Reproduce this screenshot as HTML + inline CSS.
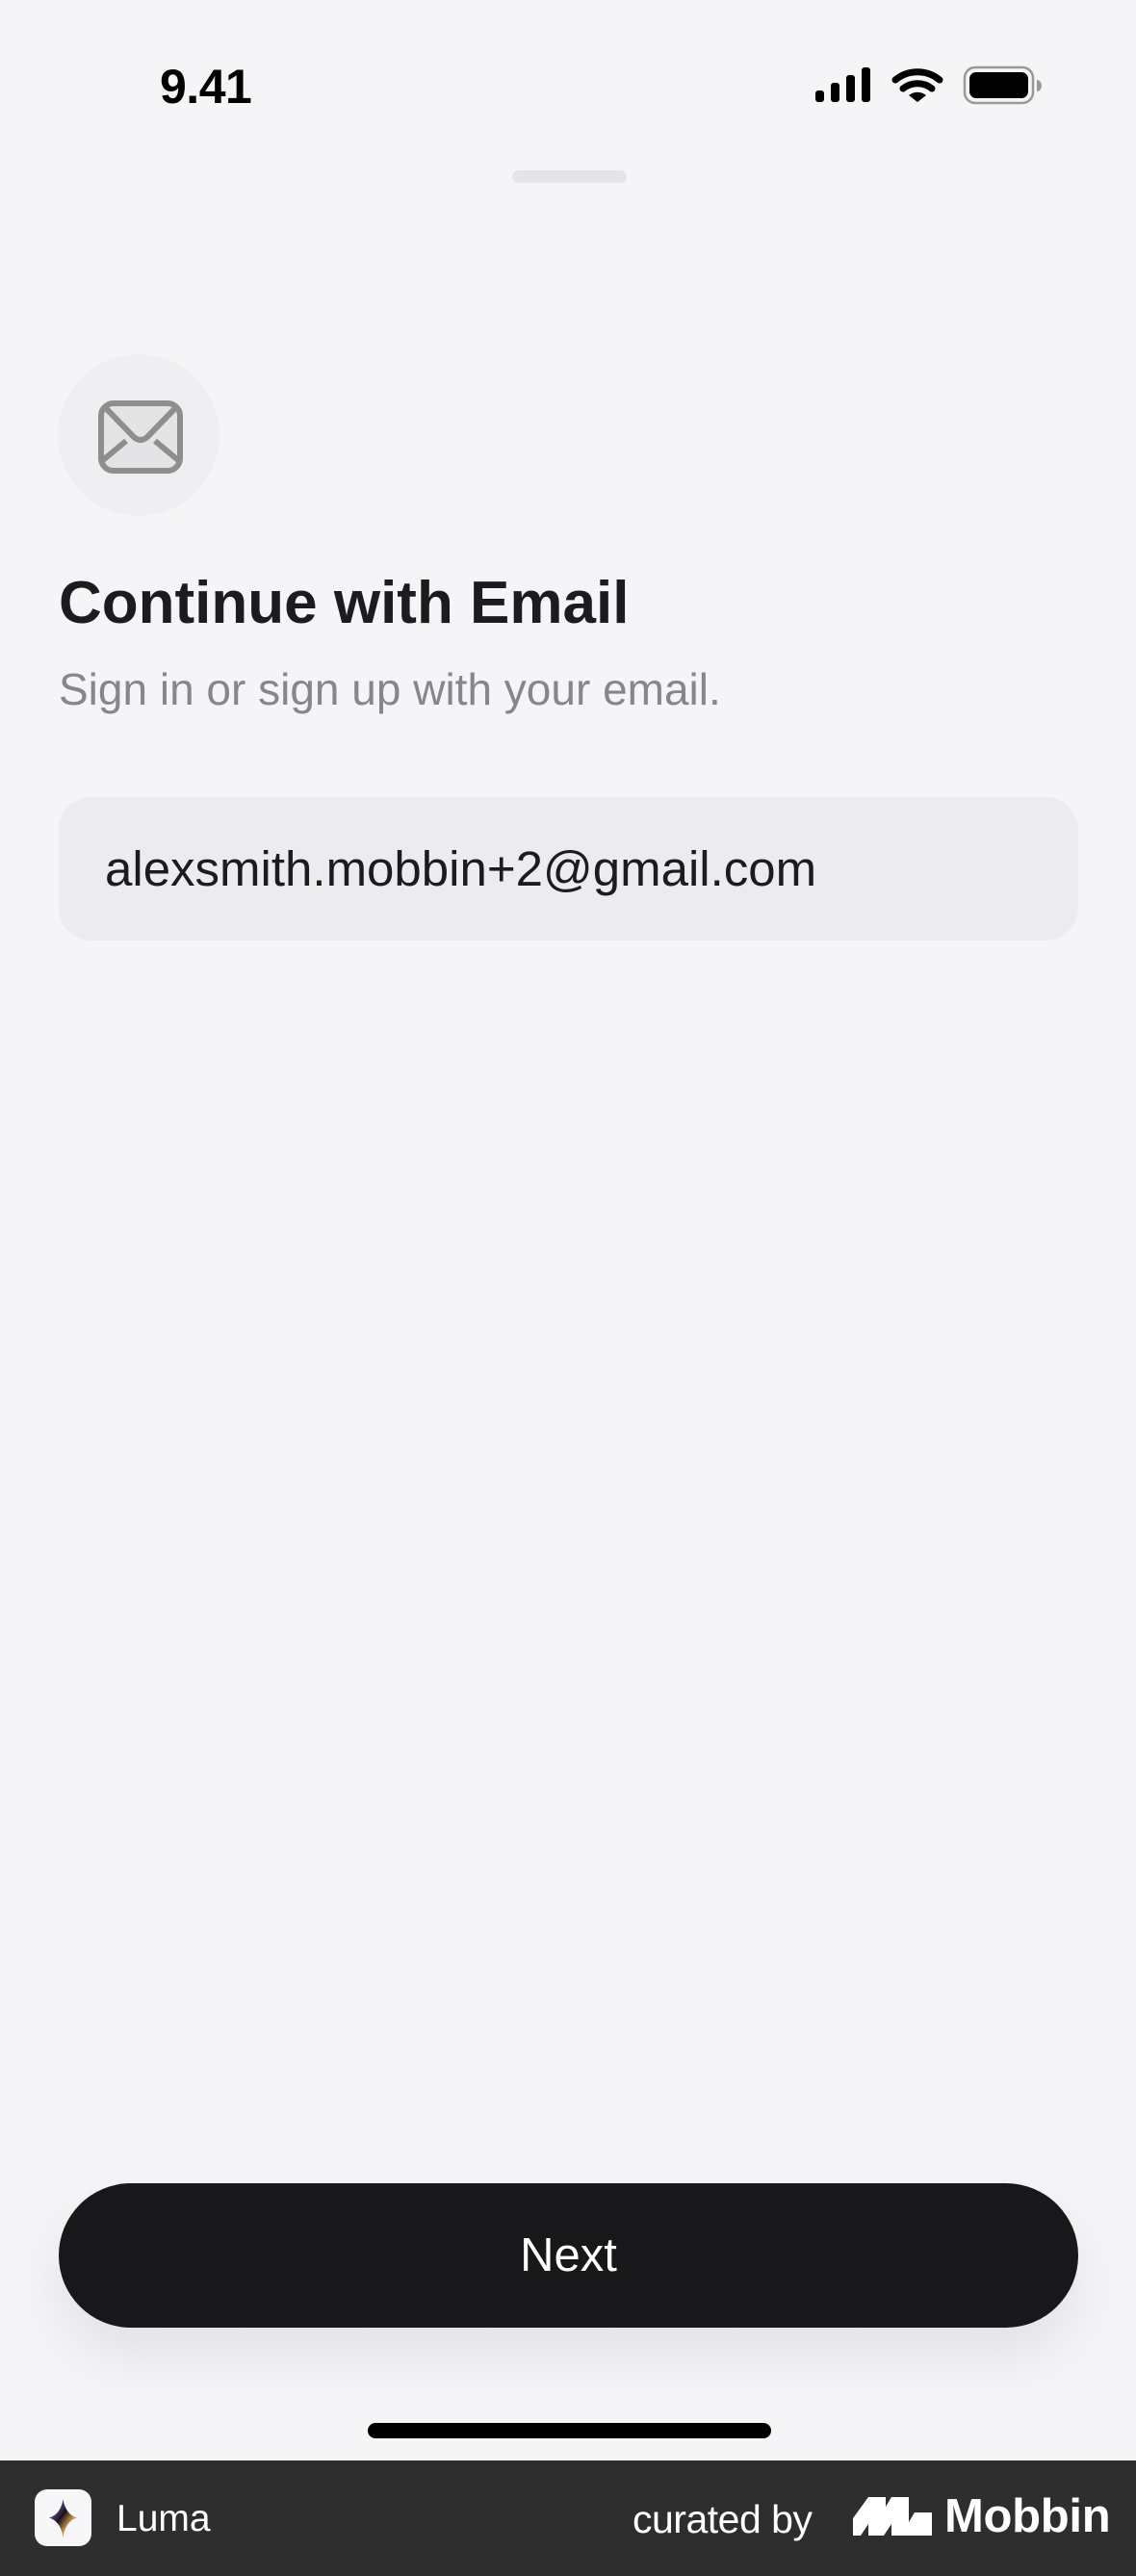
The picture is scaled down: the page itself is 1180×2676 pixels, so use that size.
<!DOCTYPE html>
<html><head><meta charset="utf-8"><style>
*{margin:0;padding:0;box-sizing:border-box}
body{width:1180px;height:2676px;background:#f5f5f7;position:relative;overflow:hidden;font-family:"Liberation Sans",sans-serif}
.a{position:absolute;white-space:nowrap}
</style></head><body>
<div class="a" style="left:166px;top:60px;font-size:50px;font-weight:bold;color:#000;line-height:60px;letter-spacing:-0.5px">9.41</div>
<svg class="a" style="left:845px;top:66px" width="245" height="45" viewBox="845 66 245 45">
<rect x="847" y="94" width="9" height="12" rx="3" fill="#000"/>
<rect x="863" y="86" width="9" height="20" rx="3" fill="#000"/>
<rect x="879" y="78" width="9" height="28" rx="3" fill="#000"/>
<rect x="895" y="70" width="9" height="36" rx="3" fill="#000"/>
<path d="M930 83 A36 36 0 0 1 976 83" stroke="#000" stroke-width="7" fill="none" stroke-linecap="round"/>
<path d="M938 92 A24 24 0 0 1 968 92" stroke="#000" stroke-width="7" fill="none" stroke-linecap="round"/>
<path d="M944 99 L953 106 L962 99 A14 14 0 0 0 944 99Z" fill="#000"/>
<rect x="1002" y="70" width="71" height="37" rx="11" fill="none" stroke="#999" stroke-width="2.5"/>
<rect x="1007" y="75" width="61" height="27" rx="7" fill="#000"/>
<path d="M1077 83 a5 6 0 0 1 0 12z" fill="#999"/>
</svg>
<div class="a" style="left:532px;top:177px;width:119px;height:13px;border-radius:7px;background:#e4e4e7"></div>
<div class="a" style="left:60px;top:368px;width:168px;height:168px;border-radius:50%;background:#efeff1"></div>
<svg class="a" style="left:100px;top:414px" width="92" height="80" viewBox="0 0 92 80">
<rect x="5" y="5" width="82" height="70" rx="13" fill="#e4e4e7" stroke="#8e8e8e" stroke-width="6"/>
<path d="M9 9 L39 40 Q46 46 53 40 L83 9" fill="none" stroke="#8e8e8e" stroke-width="6" stroke-linejoin="round"/>
<path d="M7 64 L31 44 M85 64 L61 44" stroke="#8e8e8e" stroke-width="6"/>
</svg>
<div class="a" style="left:61px;top:592px;font-size:62px;font-weight:bold;color:#1c1c1e;line-height:70px">Continue with Email</div>
<div class="a" style="left:61px;top:690px;font-size:46px;color:#86868b;line-height:52px">Sign in or sign up with your email.</div>
<div class="a" style="left:61px;top:828px;width:1059px;height:149px;border-radius:34px;background:#ececef"></div>
<div class="a" style="left:109px;top:874px;font-size:51px;color:#1c1c1e;line-height:58px">alexsmith.mobbin+2@gmail.com</div>
<div class="a" style="left:61px;top:2268px;width:1059px;height:150px;border-radius:75px;background:#18181a;box-shadow:0 30px 60px rgba(0,0,0,0.08);color:#fff;font-size:49px;text-align:center;line-height:150px">Next</div>
<div class="a" style="left:382px;top:2517px;width:419px;height:16px;border-radius:8px;background:#000"></div>
<div class="a" style="left:0;top:2556px;width:1180px;height:120px;background:#2e2e2e"></div>
<div class="a" style="left:36px;top:2586px;width:59px;height:59px;border-radius:13px;background:#f7f7f9"></div>
<svg class="a" style="left:36px;top:2586px" width="59" height="59" viewBox="0 0 59 59">
<defs><linearGradient id="g" x1="0" y1="0" x2="1" y2="1"><stop offset="0" stop-color="#b78cff"/><stop offset=".45" stop-color="#1a1020"/><stop offset=".7" stop-color="#d9a24a"/><stop offset="1" stop-color="#2a1a2a"/></linearGradient></defs>
<path d="M29.5 10 Q32 26 44 29.5 Q32 33 29.5 50 Q27 33 15 29.5 Q27 26 29.5 10Z" fill="url(#g)"/>
</svg>
<div class="a" style="left:121px;top:2594px;font-size:39px;color:#fff;line-height:46px">Luma</div>
<div class="a" style="left:657px;top:2594px;font-size:41px;color:#fff;line-height:46px;letter-spacing:-0.5px">curated by</div>
<svg class="a" style="left:886px;top:2594px" width="82" height="40" viewBox="0 0 82 40">
<path d="M0 40 L0 22 L16 0 L34 0 L34 10 L40 0 L58 0 L58 26 L64 16 L82 16 L82 40 L58 40 L58 40 L40 40 L40 28 L32 40 L16 40 L16 28 L8 40Z" fill="#fff"/>
</svg>
<div class="a" style="left:981px;top:2587px;font-size:49px;font-weight:bold;color:#fff;line-height:54px;letter-spacing:-0.3px">Mobbin</div>
</body></html>
